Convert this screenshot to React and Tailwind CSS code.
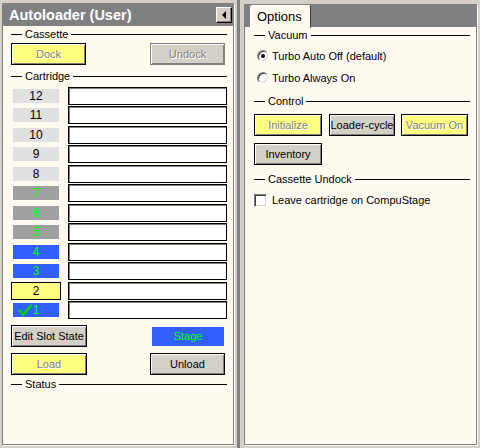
import React from "react";

const BODY = "font-['Liberation_Sans',Arial,sans-serif]";

const slots = [
  { n: 12, kind: "light" },
  { n: 11, kind: "light" },
  { n: 10, kind: "light" },
  { n: 9, kind: "light" },
  { n: 8, kind: "light" },
  { n: 7, kind: "dark" },
  { n: 6, kind: "dark" },
  { n: 5, kind: "dark" },
  { n: 4, kind: "blue" },
  { n: 3, kind: "blue" },
  { n: 2, kind: "selected" },
  { n: 1, kind: "blue", checked: true },
];

const GroupHeader = ({ label, className = "" }) => (
  <div className={`flex items-center h-[14px] ${className}`}>
    <div className="w-[11px] h-px bg-black" />
    <span className="px-[3px] text-[11px] leading-[14px] text-black whitespace-nowrap">
      {label}
    </span>
    <div className="flex-1 h-px bg-black" />
  </div>
);

const Btn = ({ children, yellow, disabled, className = "" }) => {
  const bg = yellow ? "bg-[#ffff80]" : "bg-[#d4d0c8]";
  const border = disabled && !yellow ? "border-[#808080]" : "border-black";
  const text = disabled
    ? "text-[#808080] [text-shadow:1px_1px_0_#fff]"
    : "text-black";
  return (
    <button
      type="button"
      className={`h-[22px] flex items-center justify-center whitespace-nowrap border ${border} ${bg} shadow-[inset_1px_1px_0_#fff,inset_-1px_-1px_0_#808080] text-[11px] leading-none ${text} ${className}`}
    >
      {children}
    </button>
  );
};

const SlotLabel = ({ slot }) => {
  if (slot.kind === "selected") {
    return (
      <div className="w-[50px] h-[18px] border border-black bg-[#ffff80] flex items-center justify-center text-[12px] leading-none text-black">
        {slot.n}
      </div>
    );
  }
  const styles = {
    light: "bg-[#e0e0e0] text-black",
    dark: "bg-[#a0a0a0] text-[#00ff00]",
    blue: "bg-[#3060ff] text-[#00ff00]",
  };
  return (
    <div className="w-[50px] pl-[2px]">
      <div
        className={`relative w-[46px] h-[14px] flex items-center justify-center text-[12px] leading-none ${styles[slot.kind]}`}
      >
        {slot.checked && (
          <svg
            className="absolute left-[5px] top-[1px]"
            width="14"
            height="13"
            viewBox="0 0 14 13"
          >
            <path
              d="M1.5 6.5 L5 11 L13 1.5"
              fill="none"
              stroke="#00d000"
              strokeWidth="2.6"
              strokeLinecap="round"
              strokeLinejoin="round"
            />
          </svg>
        )}
        {slot.n}
      </div>
    </div>
  );
};

const Radio = ({ checked, label, className = "" }) => (
  <div className={`flex items-center h-[16px] ${className}`}>
    <div className="ml-[3px] w-[12px] h-[12px] rounded-full border border-t-[#808080] border-l-[#808080] border-b-white border-r-white bg-white shadow-[inset_1px_1px_0_#404040,inset_-1px_-1px_0_#d4d0c8] flex items-center justify-center">
      {checked && <div className="w-[4px] h-[4px] rounded-full bg-black" />}
    </div>
    <span className="ml-[3px] text-[11px] leading-none text-black">{label}</span>
  </div>
);

const App = () => {
  return (
    <div className={`w-[480px] h-[448px] bg-[#d4d0c8] flex overflow-hidden ${BODY}`}>
      {/* Autoloader panel */}
      <div className="w-[237px] shrink-0 pl-[2px] pt-[3px]">
        <div className="w-[232px] h-[442px] border border-[#808080] bg-[#fffaf0] shadow-[1px_1px_0_#fff] flex flex-col">
          <div className="h-[22px] bg-[#808080] flex items-center pl-[6px] pr-[1px]">
            <span className="flex-1 text-white font-bold text-[14.5px] leading-none">
              Autoloader (User)
            </span>
            <button
              type="button"
              className="w-[16px] h-[16px] bg-[#d4d0c8] border border-t-white border-l-white border-b-black border-r-black shadow-[inset_-1px_-1px_0_#808080] flex items-center justify-center"
            >
              <svg width="5" height="8" viewBox="0 0 5 8">
                <path d="M4 0 L0 4 L4 8 Z" fill="#000" />
              </svg>
            </button>
          </div>

          <div className="pl-[8px] pr-[6px]">
            <GroupHeader label="Cassette" className="mt-[1px]" />
            <div className="mt-[2px] flex justify-between pr-[2px]">
              <Btn yellow disabled className="w-[75px]">
                Dock
              </Btn>
              <Btn disabled className="w-[75px]">
                Undock
              </Btn>
            </div>

            <GroupHeader label="Cartridge" className="mt-[4px]" />
            <div className="mt-[3px] flex flex-col">
              {slots.map((slot) => (
                <div key={slot.n} className="h-[19.5px] flex items-center">
                  <SlotLabel slot={slot} />
                  <div className="ml-[7px] flex-1 h-[18px] bg-white border border-black shadow-[inset_1px_1px_0_#808080]" />
                </div>
              ))}
            </div>

            <div className="mt-[5px] flex items-center justify-between">
              <Btn className="w-[76px]">Edit Slot State</Btn>
              <div className="mr-[3px] w-[72px] h-[19px] bg-[#3060ff] text-[#00ff00] text-[11px] leading-none flex items-center justify-center">
                Stage
              </div>
            </div>
            <div className="mt-[6px] flex justify-between pr-[2px]">
              <Btn yellow disabled className="w-[76px]">
                Load
              </Btn>
              <Btn className="w-[75px]">Unload</Btn>
            </div>

            <GroupHeader label="Status" className="mt-[2px]" />
          </div>
        </div>
      </div>

      {/* Splitter */}
      <div className="w-[3px] shrink-0 bg-[#808080]" />

      {/* Options panel */}
      <div className="w-[240px] shrink-0 pl-[4px] pt-[4px]">
        <div className="w-[233px] h-[441px] border border-[#808080] bg-[#808080] shadow-[1px_1px_0_#fff] flex flex-col">
          <div className="h-[22px] flex items-end pl-[5px]">
            <div className="relative z-10 w-[61px] h-[23px] -mb-px bg-[#fffaf0] border-t border-l border-white border-r border-r-[#404040] rounded-t-[3px] pl-[6px] pt-[3px] text-[13px] leading-[16px] text-black">
              Options
            </div>
          </div>
          <div className="flex-1 bg-[#fffaf0] border-t border-white pl-[9px] pr-[6px]">
            <GroupHeader label="Vacuum" className="h-[13px]" />
            <Radio checked label="Turbo Auto Off (default)" className="mt-[6px]" />
            <Radio label="Turbo Always On" className="mt-[6px]" />

            <GroupHeader label="Control" className="mt-[8px]" />
            <div className="mt-[6px] flex">
              <Btn yellow disabled className="w-[68px]">
                Initialize
              </Btn>
              <Btn className="ml-[7px] w-[66px]">Loader-cycle</Btn>
              <Btn yellow disabled className="ml-[6px] w-[67px]">
                Vacuum On
              </Btn>
            </div>
            <Btn className="mt-[7px] w-[68px]">Inventory</Btn>

            <GroupHeader label="Cassette Undock" className="mt-[7px]" />
            <div className="mt-[6px] flex items-center h-[16px]">
              <div className="w-[13px] h-[13px] bg-white border border-t-[#808080] border-l-[#808080] border-b-white border-r-white shadow-[inset_1px_1px_0_#404040,inset_-1px_-1px_0_#d4d0c8]" />
              <span className="ml-[5px] text-[11px] leading-none text-black">
                Leave cartridge on CompuStage
              </span>
            </div>
          </div>
        </div>
      </div>
    </div>
  );
};

export default App;
